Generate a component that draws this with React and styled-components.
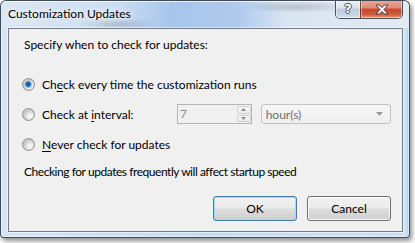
import React from 'react';
import styled, { createGlobalStyle, css } from 'styled-components';

const Global = createGlobalStyle`
  html, body { margin: 0; padding: 0; background: #ffffff; }
  body { font-family: Lato, "Liberation Sans", sans-serif; font-size: 12px; color: #000; }
  * { box-sizing: border-box; }
`;

const Stage = styled.div`
  width: 415px;
  height: 243px;
  overflow: hidden;
  background: #ffffff;
`;

const Frame = styled.div`
  width: 410px;
  height: 238px;
  border: 1px solid rgba(38, 48, 62, 0.85);
  border-radius: 6px 6px 4px 4px;
  background: linear-gradient(90deg, #d6e5f5 0%, #c6dbf2 50%, #cfe0f3 100%);
  box-shadow: 2px 3px 5px rgba(0, 0, 0, 0.45), inset 0 0 0 1px rgba(255, 255, 255, 0.55),
    inset -2px 0 0 rgba(140, 210, 245, 0.6);
  display: flex;
  flex-direction: column;
  padding: 0 6px 5px 7px;
  overflow: hidden;
`;

const TitleBar = styled.div`
  height: 27px;
  margin: 0 -6px 0 -7px;
  padding: 0 6px 0 7px;
  display: flex;
  align-items: flex-start;
  justify-content: space-between;
  background:
    radial-gradient(ellipse 40px 6px at 118px 23px, rgba(120, 130, 145, 0.35), transparent),
    radial-gradient(ellipse 55px 6px at 295px 6px, rgba(120, 125, 135, 0.35), transparent),
    linear-gradient(90deg, #dbe7f4 0%, #cddff3 28%, #a6c5eb 42%, #afcaed 58%, #d9e5f2 70%, #e2eaf4 100%);
  border-radius: 5px 5px 0 0;
  box-shadow: inset 0 1px 0 rgba(255, 255, 255, 0.7);
`;

const Title = styled.div`
  margin-top: 5px;
  line-height: 16px;
  font-size: 12px;
  color: #000;
  text-shadow: 0 0 5px rgba(255, 255, 255, 0.95), 0 0 8px rgba(255, 255, 255, 0.8);
`;

const Caption = styled.div`
  display: flex;
  height: 19px;
  margin-top: -1px;
  border: 1px solid rgba(45, 55, 70, 0.85);
  border-top: none;
  border-radius: 0 0 5px 5px;
  overflow: hidden;
`;

const CapButton = styled.div`
  width: ${(p) => p.$w}px;
  height: 100%;
  display: flex;
  align-items: center;
  justify-content: center;
  box-shadow: inset 0 0 0 1px rgba(255, 255, 255, 0.45);
  ${(p) =>
    p.$close
      ? css`
          background: linear-gradient(180deg, #e9aa9c 0%, #dc8a77 45%, #c7472c 50%, #cf5a3c 80%, #e49a79 100%);
          border-left: 1px solid rgba(60, 40, 40, 0.7);
        `
      : css`
          background: linear-gradient(180deg, #eef3f9 0%, #d9e2ec 45%, #bccadb 50%, #c8d5e4 85%, #d8e4f0 100%);
        `}
`;

const HelpGlyph = styled.span`
  font-family: "DejaVu Sans", sans-serif;
  font-weight: bold;
  font-size: 13px;
  line-height: 1;
  color: #fff;
  margin-top: -1px;
  text-shadow: 1px 0 0 #4a5563, -1px 0 0 #4a5563, 0 1px 0 #4a5563, 0 -1px 0 #4a5563;
`;

const Client = styled.div`
  flex: 1;
  background: #f0f0f0;
  border: 1px solid #6f7d8d;
  box-shadow: 0 0 0 1px rgba(255, 255, 255, 0.5);
  display: flex;
  flex-direction: column;
  padding: 8px 11px 10px 13px;
`;

const Text = styled.div`
  line-height: 16px;
  margin-left: 2px;
  margin-top: ${(p) => p.$mt || 0}px;
  letter-spacing: ${(p) => p.$ls || 0}px;
  white-space: nowrap;
`;

const Options = styled.div`
  display: flex;
  flex-direction: column;
  gap: 10px;
  margin-top: 21px;
`;

const Row = styled.label`
  display: flex;
  align-items: center;
  height: 20px;
  white-space: nowrap;
`;

const Radio = styled.span`
  width: 13px;
  height: 13px;
  flex-shrink: 0;
  border-radius: 50%;
  border: 1px solid #8c8e90;
  background: radial-gradient(circle at 65% 65%, #fdfdfd 0, #eeeeee 2px, #dedede 4px, #c9c9c9 6px);
  margin-right: 7px;
  display: flex;
  align-items: center;
  justify-content: center;
  ${(p) =>
    p.$checked &&
    css`
      &::after {
        content: '';
        width: 7px;
        height: 7px;
        border-radius: 50%;
        background: radial-gradient(circle at 45% 45%, #1d4f86 0, #1d5a9c 1.5px, #3a86cc 2.5px, #8cc7ef 3.5px);
      }
    `}
`;

const Key = styled.u`
  text-decoration: underline;
  text-underline-offset: 2px;
  text-decoration-thickness: 1px;
`;

const LabelText = styled.span`
  width: ${(p) => (p.$w ? `${p.$w}px` : 'auto')};
  flex-shrink: 0;
`;

const Spinner = styled.div`
  width: 75px;
  height: 20px;
  border: 1px solid #b5b5b5;
  display: flex;
  background: #f0f0f0;
`;

const SpinValue = styled.div`
  flex: 1;
  padding-left: 2px;
  line-height: 17px;
  color: #8a8a8a;
  font-size: 12px;
`;

const SpinButtons = styled.div`
  width: 14px;
  display: flex;
  flex-direction: column;
  gap: 1px;
  padding: 1px 0 1px 0;
`;

const SpinBtn = styled.div`
  flex: 1;
  border: 1px solid #d0d0d0;
  border-radius: 2px;
  background: linear-gradient(180deg, #f7f7f7, #ececec);
  display: flex;
  align-items: center;
  justify-content: center;
`;

const Combo = styled.div`
  width: 131px;
  height: 20px;
  margin-left: 9px;
  border: 1px solid #c3c3c3;
  border-radius: 3px;
  background: linear-gradient(180deg, #f6f6f6, #efefef);
  display: flex;
  align-items: center;
  justify-content: space-between;
  padding: 0 7px 0 4px;
  color: #6d6d6d;
`;

const Buttons = styled.div`
  margin-top: 16px;
  display: flex;
  justify-content: flex-end;
  gap: 10px;
`;

const Button = styled.div`
  width: 84px;
  height: 25px;
  border-radius: 3px;
  border: 1px solid ${(p) => (p.$default ? '#3c7fb1' : '#707070')};
  background: linear-gradient(180deg, #f2f2f2 0%, #ebebeb 48%, #dddddd 52%, #cfcfcf 100%);
  box-shadow: inset 0 0 0 1px ${(p) => (p.$default ? 'rgba(150, 220, 250, 0.9)' : 'rgba(255, 255, 255, 0.8)')};
  display: flex;
  align-items: center;
  justify-content: center;
  line-height: 16px;
`;

const Arrow = ({ up, color = '#8a8a8a', w = 5, h = 3 }) => (
  <svg width={w} height={h} viewBox={`0 0 ${w} ${h}`}>
    <polygon
      points={up ? `0,${h} ${w},${h} ${w / 2},0` : `0,0 ${w},0 ${w / 2},${h}`}
      fill={color}
    />
  </svg>
);

const CloseGlyph = () => (
  <svg width="14" height="11" viewBox="0 0 14 11">
    <path
      d="M1 1 H4.5 L7 3.6 L9.5 1 H13 L9 5.5 L13 10 H9.5 L7 7.4 L4.5 10 H1 L5 5.5 Z"
      fill="#ffffff"
      stroke="#4a3a3a"
      strokeWidth="1"
      strokeLinejoin="round"
    />
  </svg>
);

export default function App() {
  return (
    <Stage>
      <Global />
      <Frame>
        <TitleBar>
          <Title>Customization Updates</Title>
          <Caption>
            <CapButton $w={24}>
              <HelpGlyph>?</HelpGlyph>
            </CapButton>
            <CapButton $w={42} $close>
              <CloseGlyph />
            </CapButton>
          </Caption>
        </TitleBar>
        <Client>
          <Text>Specify when to check for updates:</Text>
          <Options>
            <Row>
              <Radio $checked />
              <LabelText>
                Ch<Key>e</Key>ck every time the customization runs
              </LabelText>
            </Row>
            <Row>
              <Radio />
              <LabelText $w={135}>
                Check at <Key>i</Key>nterval:
              </LabelText>
              <Spinner>
                <SpinValue>7</SpinValue>
                <SpinButtons>
                  <SpinBtn>
                    <Arrow up />
                  </SpinBtn>
                  <SpinBtn>
                    <Arrow />
                  </SpinBtn>
                </SpinButtons>
              </Spinner>
              <Combo>
                <span>hour(s)</span>
                <Arrow color="#9a9a9a" w={7} h={4} />
              </Combo>
            </Row>
            <Row>
              <Radio />
              <LabelText>
                <Key>N</Key>ever check for updates
              </LabelText>
            </Row>
          </Options>
          <Text $mt={10} $ls={-0.45}>
            Checking for updates frequently will affect startup speed
          </Text>
          <Buttons>
            <Button $default>OK</Button>
            <Button>Cancel</Button>
          </Buttons>
        </Client>
      </Frame>
    </Stage>
  );
}
